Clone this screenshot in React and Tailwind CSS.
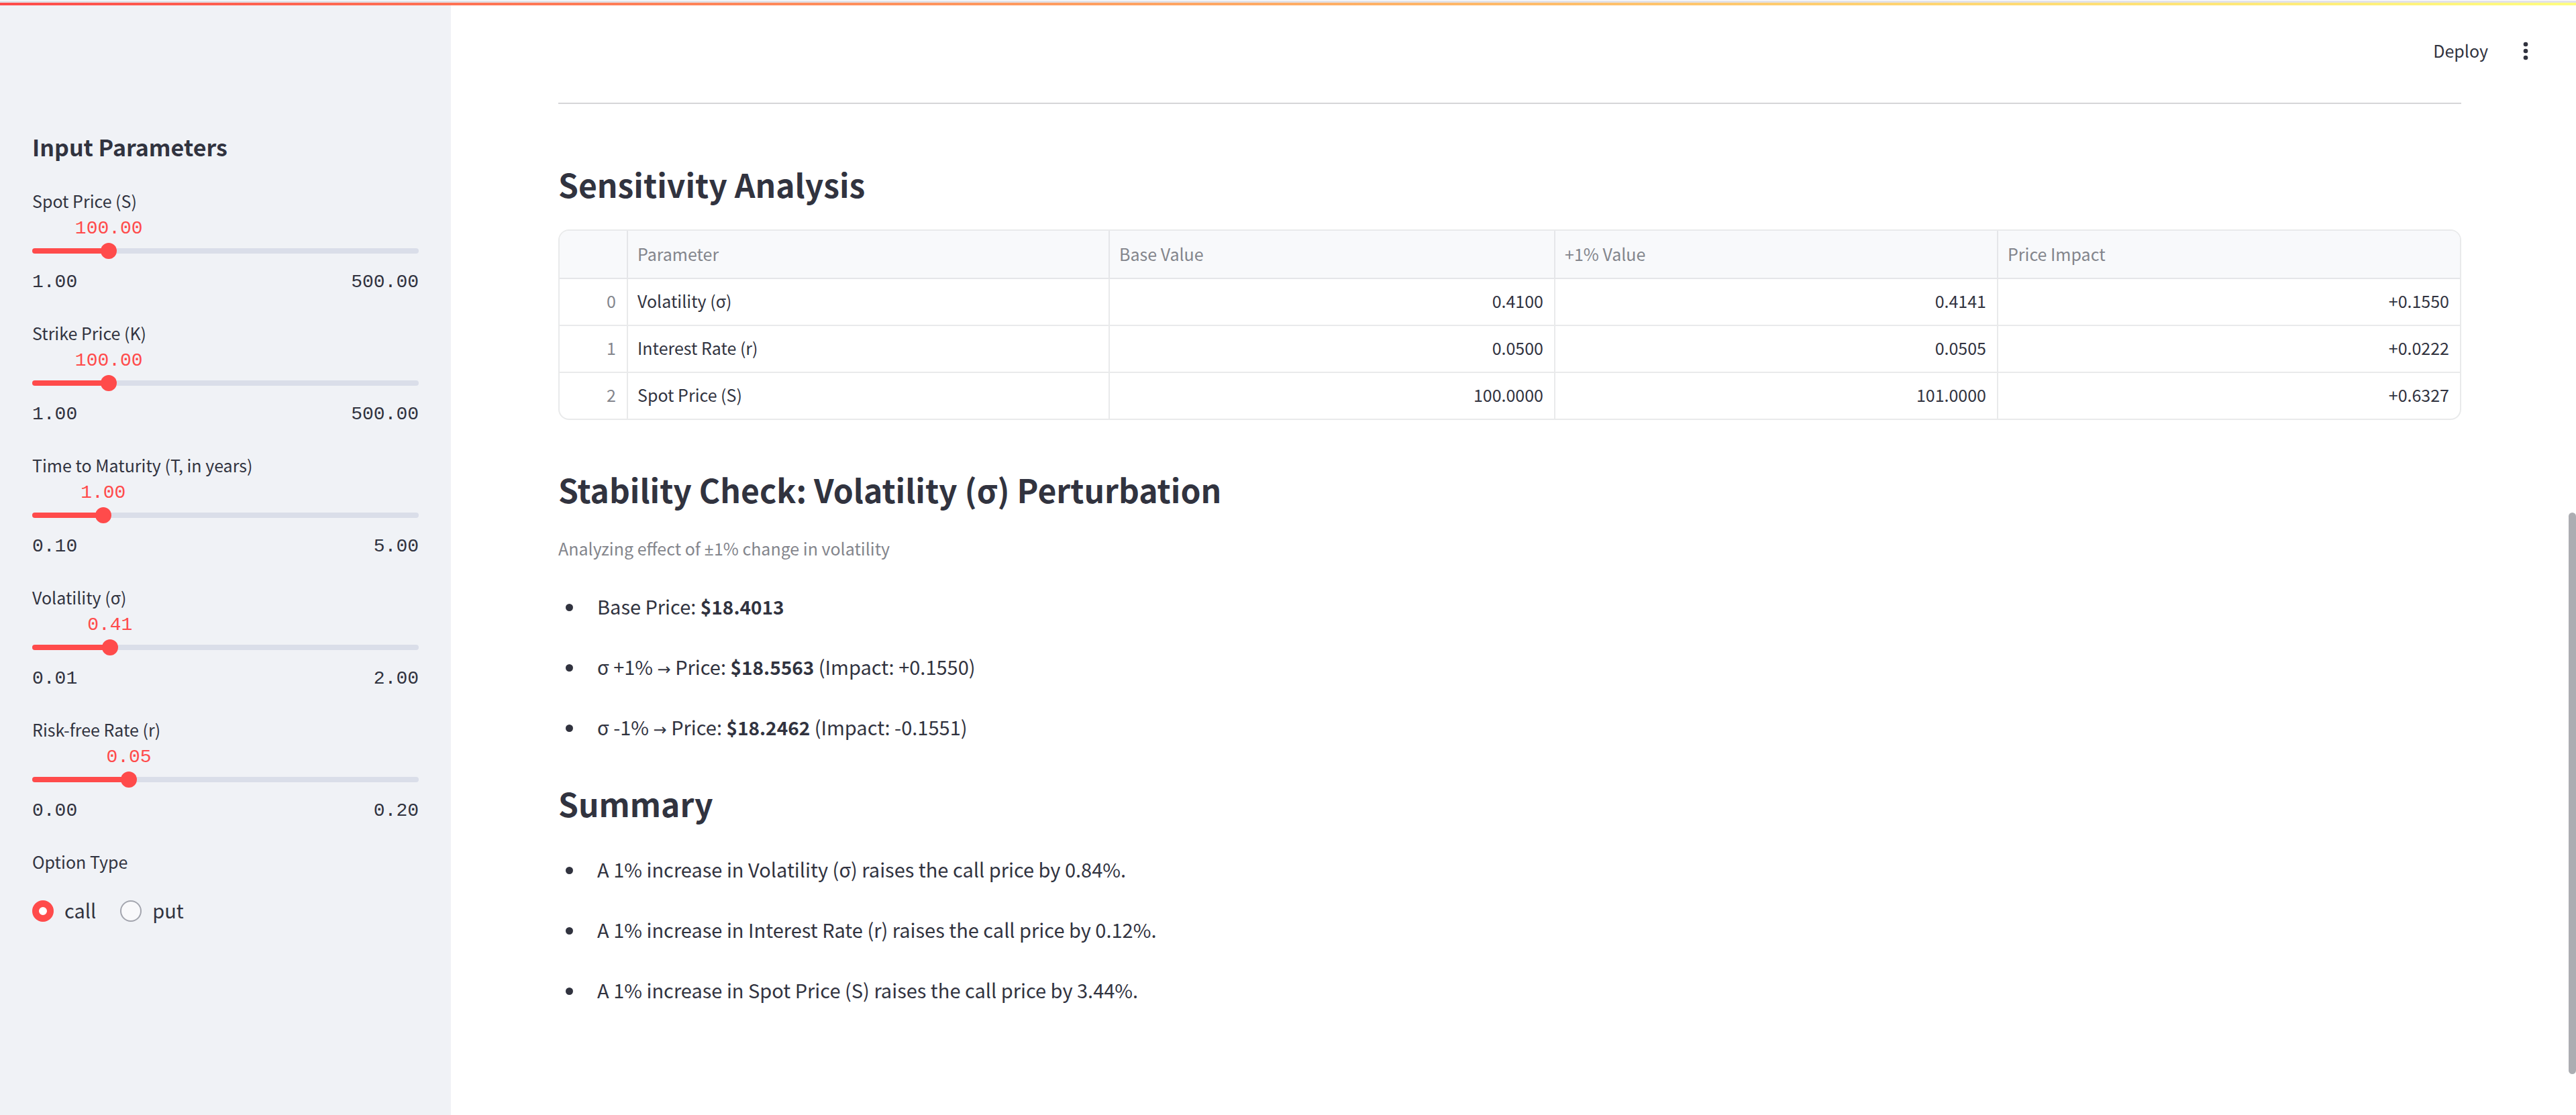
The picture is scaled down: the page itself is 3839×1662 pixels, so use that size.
import { useState } from "react";

const sliders = [
  { id: "spot", label: "Spot Price (S)", min: 1, max: 500, step: 1, initial: 100 },
  { id: "strike", label: "Strike Price (K)", min: 1, max: 500, step: 1, initial: 100 },
  { id: "maturity", label: "Time to Maturity (T, in years)", min: 0.1, max: 5, step: 0.1, initial: 1 },
  { id: "volatility", label: "Volatility (σ)", min: 0.01, max: 2, step: 0.01, initial: 0.41 },
  { id: "rate", label: "Risk-free Rate (r)", min: 0, max: 0.2, step: 0.01, initial: 0.05 },
];

const rows = [
  ["Volatility (σ)", "0.4100", "0.4141", "+0.1550"],
  ["Interest Rate (r)", "0.0500", "0.0505", "+0.0222"],
  ["Spot Price (S)", "100.0000", "101.0000", "+0.6327"],
];

const summary = [
  "A 1% increase in Volatility (σ) raises the call price by 0.84%.",
  "A 1% increase in Interest Rate (r) raises the call price by 0.12%.",
  "A 1% increase in Spot Price (S) raises the call price by 3.44%.",
];

function Slider({ id, label, min, max, step, initial }) {
  const [value, setValue] = useState(initial);
  const percent = `${((value - min) / (max - min)) * 100}%`;
  return (
    <div className="flex flex-col">
      <label htmlFor={id} className="h-12 text-[25px] leading-[48px]">
        {label}
      </label>
      <div className="relative h-9 font-['Liberation_Mono',monospace] text-[28px] leading-9 text-[#ff4b4b]">
        <output htmlFor={id} className="absolute -translate-x-1/2" style={{ left: percent }}>
          {value.toFixed(2)}
        </output>
      </div>
      <div className="relative flex h-[30px] items-center">
        <div className="h-2 w-full overflow-hidden rounded-full bg-[#dadee9]">
          <div className="h-full bg-[#ff4b4b]" style={{ width: percent }} />
        </div>
        <input
          id={id}
          type="range"
          min={min}
          max={max}
          step="any"
          value={value}
          onChange={(e) => setValue(Math.round(Number(e.target.value) / step) * step)}
          className="absolute -inset-x-3 h-6 cursor-pointer appearance-none bg-transparent [&::-webkit-slider-thumb]:size-6 [&::-webkit-slider-thumb]:appearance-none [&::-webkit-slider-thumb]:rounded-full [&::-webkit-slider-thumb]:bg-[#ff4b4b]"
        />
      </div>
      <div className="flex justify-between pt-4 font-['Liberation_Mono',monospace] text-[28px] leading-8">
        <span>{min.toFixed(2)}</span>
        <span>{max.toFixed(2)}</span>
      </div>
    </div>
  );
}

function Radio({ value, checked, onChange }) {
  return (
    <label className="flex h-12 cursor-pointer items-center gap-4 text-[29px] leading-[44px]">
      <input
        type="radio"
        name="option-type"
        value={value}
        checked={checked}
        onChange={onChange}
        className="size-8 appearance-none rounded-full border-2 border-[#a3a5ae] bg-[#f9f9fb] checked:border-10 checked:border-[#ff4b4b] checked:bg-white"
      />
      <span className="pb-1">{value}</span>
    </label>
  );
}

function Bullets({ children }) {
  return <ul className="flex flex-col gap-[38px] text-[29px] leading-[48px]">{children}</ul>;
}

function Bullet({ children }) {
  return (
    <li className="flex items-center gap-9 pl-[11px]">
      <span className="size-[11px] shrink-0 rounded-full bg-[#31333f]" />
      <span className="pb-1">{children}</span>
    </li>
  );
}

function Price({ children }) {
  return <strong className="text-[28px] leading-6 font-bold">{children}</strong>;
}

function Arrow() {
  return <span className="font-['DejaVu_Sans',sans-serif] text-2xl leading-6">→</span>;
}

function Heading({ children }) {
  return <h3 className="text-5xl leading-[68px] font-semibold">{children}</h3>;
}

export default function App() {
  const [option, setOption] = useState("call");
  return (
    <div className="flex h-screen flex-col overflow-hidden bg-white font-['Noto_Sans_CJK_JP','Noto_Sans',sans-serif] text-[#31333f]">
      <div className="h-1 shrink-0 border-t border-white bg-[#e2e2e8]" />
      <div className="h-1 shrink-0 bg-linear-to-r from-[#ff4b4b] to-[#fffd80]" />
      <div className="flex min-h-0 flex-1">
        <aside className="w-[672px] shrink-0 bg-[#f0f2f6] px-12 pt-[183px]">
          <h2 className="text-[34px] leading-[56px] font-semibold">Input Parameters</h2>
          <div className="mt-7 flex flex-col gap-[35px]">
            {sliders.map((s) => (
              <Slider key={s.id} {...s} />
            ))}
            <fieldset>
              <legend className="text-[25px] leading-[48px]">Option Type</legend>
              <div className="mt-[26px] flex gap-9">
                <Radio value="call" checked={option === "call"} onChange={() => setOption("call")} />
                <Radio value="put" checked={option === "put"} onChange={() => setOption("put")} />
              </div>
            </fieldset>
          </div>
        </aside>
        <div className="flex min-w-0 flex-1">
          <div className="flex min-w-0 flex-1 flex-col">
            <header className="flex items-center justify-end gap-9 pt-11 pr-[44px]">
              <button type="button" className="pb-0.5 text-[25px] leading-[46px]">Deploy</button>
              <button type="button" aria-label="Menu">
                <svg viewBox="0 0 24 24" className="size-10 fill-current">
                  <circle cx="12" cy="6" r="2" />
                  <circle cx="12" cy="12" r="2" />
                  <circle cx="12" cy="18" r="2" />
                </svg>
              </button>
            </header>
            <main className="px-40">
              <hr className="mt-[53px] border-t-2 border-[#d6d6d8]" />
              <div className="mt-[85px]">
                <Heading>Sensitivity Analysis</Heading>
              </div>
              <div className="mt-[34px] overflow-hidden rounded-2xl border-2 border-[#e9eaeb]">
                <table className="w-full table-fixed border-separate border-spacing-0 text-[25px] leading-[64px]">
                  <colgroup>
                    <col className="w-[102px]" />
                    <col className="w-[718px]" />
                    <col className="w-[664px]" />
                    <col className="w-[660px]" />
                    <col />
                  </colgroup>
                  <thead className="bg-[#f8f9fb] leading-[68px] text-[#83858c]">
                    <tr>
                      <th className="border-r-2 border-b-2 border-[#e5e6e9]" />
                      {["Parameter", "Base Value", "+1% Value", "Price Impact"].map((name) => (
                        <th
                          key={name}
                          className="border-r-2 border-b-2 border-[#e5e6e9] pb-0.5 pl-[14px] text-left font-normal last:border-r-0"
                        >
                          {name}
                        </th>
                      ))}
                    </tr>
                  </thead>
                  <tbody className="[&_td]:border-[#e9eaeb] [&_td]:pr-4 [&_td]:pb-1 [&_td]:pl-[14px] [&_td:not(:last-child)]:border-r-2 [&_tr:not(:last-child)_td]:border-b-2">
                    {rows.map((row, i) => (
                      <tr key={row[0]}>
                        <td className="text-right text-[#83858c]">{i}</td>
                        <td>{row[0]}</td>
                        <td className="text-right">{row[1]}</td>
                        <td className="text-right">{row[2]}</td>
                        <td className="text-right">{row[3]}</td>
                      </tr>
                    ))}
                  </tbody>
                </table>
              </div>
              <div className="mt-[69px]">
                <Heading>Stability Check: Volatility (σ) Perturbation</Heading>
              </div>
              <p className="mt-[30px] mb-[38px] text-[25px] leading-[48px] text-[#83858c]">
                Analyzing effect of <span className="font-['Noto_Sans',sans-serif] leading-6">±</span>1% change in volatility
              </p>
              <Bullets>
                <Bullet>
                  Base Price: <Price>$18.4013</Price>
                </Bullet>
                <Bullet>
                  σ +1% <Arrow /> Price: <Price>$18.5563</Price> (Impact: +0.1550)
                </Bullet>
                <Bullet>
                  σ -1% <Arrow /> Price: <Price>$18.2462</Price> (Impact: -0.1551)
                </Bullet>
              </Bullets>
              <div className="mt-[52px] mb-10">
                <Heading>Summary</Heading>
              </div>
              <Bullets>
                {summary.map((text) => (
                  <Bullet key={text}>{text}</Bullet>
                ))}
              </Bullets>
            </main>
          </div>
          <div className="flex w-[11px] shrink-0 flex-col pt-[756px] pb-[61px]">
            <div className="flex-1 rounded-full bg-[#acadb2]" />
          </div>
        </div>
      </div>
    </div>
  );
}
